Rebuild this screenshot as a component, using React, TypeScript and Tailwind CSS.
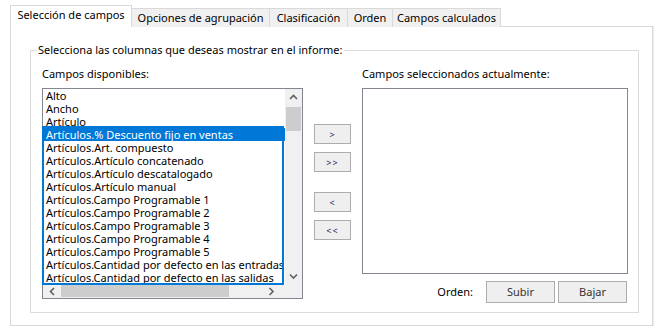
import React from "react";

const campos = [
  "Alto",
  "Ancho",
  "Artículo",
  "Artículos.% Descuento fijo en ventas",
  "Artículos.Art. compuesto",
  "Artículos.Artículo concatenado",
  "Artículos.Artículo descatalogado",
  "Artículos.Artículo manual",
  "Artículos.Campo Programable 1",
  "Artículos.Campo Programable 2",
  "Artículos.Campo Programable 3",
  "Artículos.Campo Programable 4",
  "Artículos.Campo Programable 5",
  "Artículos.Cantidad por defecto en las entradas",
  "Artículos.Cantidad por defecto en las salidas",
];

const tabs = [
  { label: "Opciones de agrupación", w: "w-[138px]" },
  { label: "Clasificación", w: "w-[78px]" },
  { label: "Orden", w: "w-[45px]" },
  { label: "Campos calculados", w: "w-[108px]" },
];

const Chevron = ({ dir }: { dir: "up" | "down" | "left" | "right" }) => {
  const d = {
    up: "M1 5 L4.5 1.5 L8 5",
    down: "M1 1.5 L4.5 5 L8 1.5",
    left: "M5 1 L1.5 4.5 L5 8",
    right: "M1.5 1 L5 4.5 L1.5 8",
  }[dir];
  const vert = dir === "up" || dir === "down";
  return (
    <svg width={vert ? 9 : 7} height={vert ? 7 : 9} viewBox={vert ? "0 0 9 7" : "0 0 7 9"}>
      <path d={d} fill="none" stroke="#606060" strokeWidth="1.6" />
    </svg>
  );
};

const btn = "w-[37px] h-[20px] border border-[#adadad] bg-[#efefef] flex items-center justify-center text-[9px] leading-none text-[#1a1a60] tracking-[1px]";

export default function App() {
  return (
    <div className="w-[661px] h-[334px] bg-white text-[11px] text-black font-['Noto_Sans',sans-serif] overflow-hidden">
      <div className="flex items-start pl-[10px] pt-[5px] whitespace-nowrap">
        <div className="relative z-10 w-[122px] h-[22px] bg-white border-l border-t border-r border-[#d9d9d9] flex items-center justify-center pb-[2px]">
          Selección de campos
        </div>
        {tabs.map((t) => (
          <div key={t.label} className={`${t.w} mt-[3px] h-[19px] bg-[#f0f0f0] border-t border-r border-[#d9d9d9] flex items-center justify-center`}>
            {t.label}
          </div>
        ))}
      </div>

      <div className="ml-[10px] -mt-px w-[643px] h-[300px] border border-[#d9d9d9] shadow-[1px_0_0_#ececec] pt-[23px] pl-[19px]">
        <div className="relative w-[609px] h-[263px] border border-[#dcdcdc] flex pl-[11px] pt-[15px]">
          <span className="absolute left-[6px] -top-[9px] bg-white px-[1px] leading-[16px]">
            Selecciona las columnas que deseas mostrar en el informe:
          </span>

          <div className="w-[261px]">
            <div className="h-[16px] leading-[16px] mb-[6px]">Campos disponibles:</div>
            <div className="w-[261px] h-[211px] border border-[#828790] flex flex-col">
              <div className="flex h-[196px]">
                <div className="relative w-[242px] h-[196px]">
                  <div className="overflow-hidden w-[242px] h-[196px]">
                    {campos.map((c, i) => (
                      <div
                        key={c}
                        className={`h-[13px] leading-[13px] pl-[3px] whitespace-nowrap ${i === 3 ? "bg-[#0078d7] text-white" : ""}`}
                      >
                        {c}
                      </div>
                    ))}
                  </div>
                  <div className="absolute -left-px top-[37px] w-[242px] h-[159px] border-2 border-[#0078d7]" />
                </div>
                <div className="w-[17px] h-[196px] bg-[#f0f0f0] flex flex-col items-center">
                  <div className="h-[17px] flex items-center justify-center">
                    <Chevron dir="up" />
                  </div>
                  <div className="mt-px w-[15px] h-[24px] bg-[#cdcdcd]" />
                  <div className="flex-1" />
                  <div className="h-[17px] flex items-center justify-center">
                    <Chevron dir="down" />
                  </div>
                </div>
              </div>
              <div className="flex h-[13px] bg-[#f0f0f0]">
                <div className="w-[18px] flex items-center justify-center">
                  <Chevron dir="left" />
                </div>
                <div className="w-[168px] h-[12px] bg-[#cdcdcd]" />
                <div className="flex-1" />
                <div className="w-[17px] flex items-center justify-center mr-[22px]">
                  <Chevron dir="right" />
                </div>
              </div>
            </div>
          </div>

          <div className="ml-[11px] mt-[58px] flex flex-col">
            <button className={btn}>&gt;</button>
            <button className={`${btn} mt-[8px]`}>&gt;&gt;</button>
            <button className={`${btn} mt-[20px]`}>&lt;</button>
            <button className={`${btn} mt-[8px]`}>&lt;&lt;</button>
          </div>

          <div className="ml-[11px] w-[266px]">
            <div className="h-[16px] leading-[16px] mb-[6px]">Campos seleccionados actualmente:</div>
            <div className="w-[266px] h-[186px] border border-[#828790] bg-white" />
            <div className="mt-[7px] flex items-center justify-end pr-px">
              <span className="mr-[13px]">Orden:</span>
              <button className="w-[69px] h-[22px] border border-[#adadad] bg-[#efefef] text-[#333]">Subir</button>
              <button className="ml-[3px] w-[69px] h-[22px] border border-[#adadad] bg-[#efefef] text-[#333]">Bajar</button>
            </div>
          </div>
        </div>
      </div>
    </div>
  );
}
